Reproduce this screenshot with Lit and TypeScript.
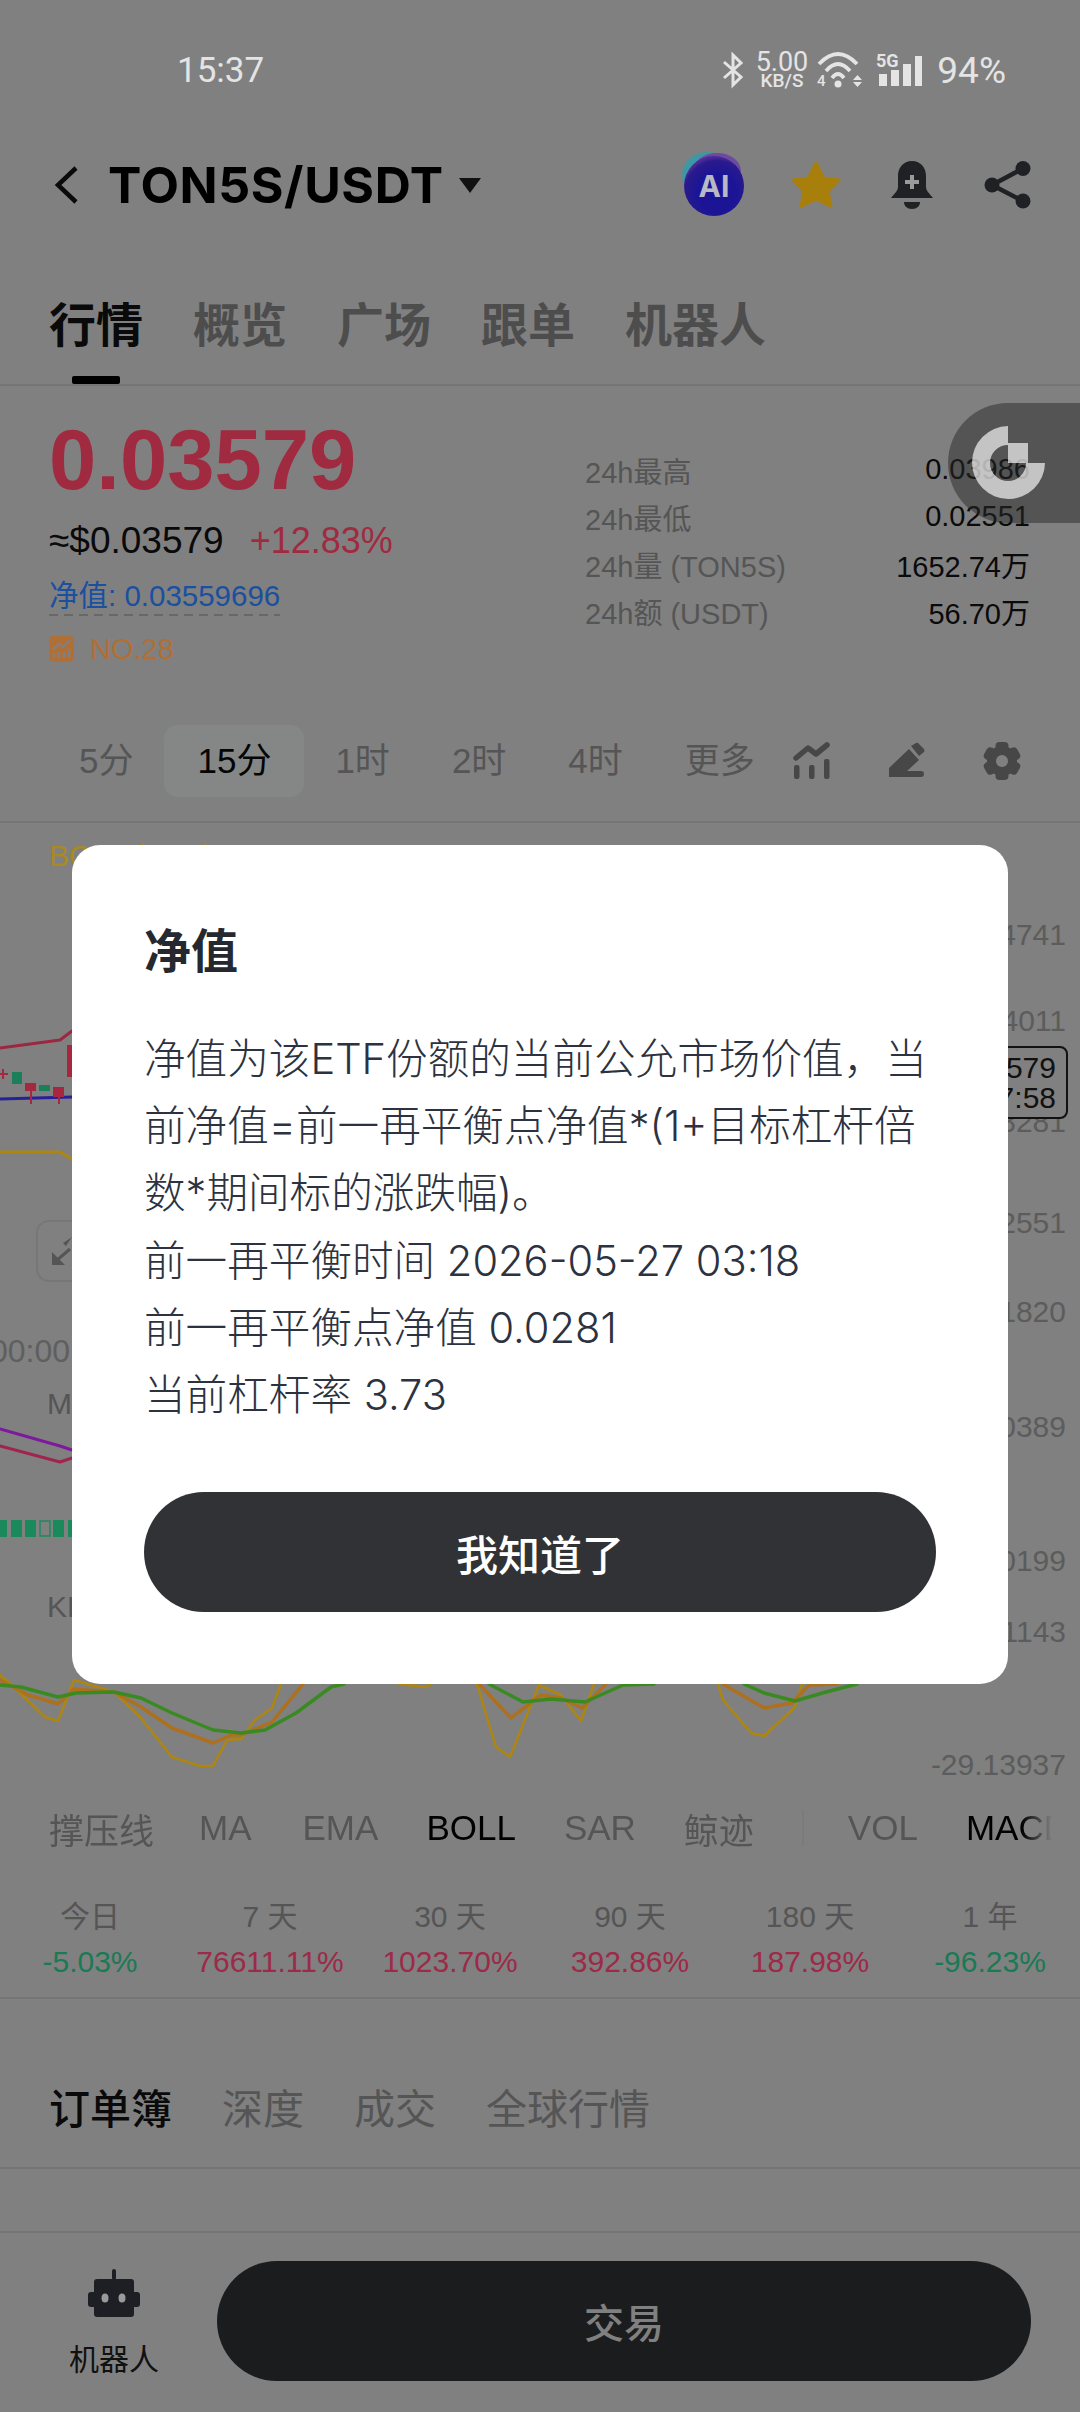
import { html, svg, LitElement, css } from 'lit';
import { customElement } from 'lit/decorators.js';

const SANS = css`'Liberation Sans', 'Noto Sans CJK SC', sans-serif`;

// kline canvas uses page coordinates through its viewBox
const AXIS = [
  ['0.04741', 935], ['0.04011', 1021], ['0.03281', 1122], ['0.02551', 1223], ['0.01820', 1312],
  ['10.0389', 1427], ['0.00199', 1561], ['31.1143', 1632], ['-29.13937', 1765],
];

const KD_LINES = [
  { cls: 'k', pts: [
    '0,1675 14,1687 45,1717 58,1721 74,1680 114,1692 141,1718 172,1757 200,1766 213,1766 227,1740 241,1739 255,1720 272,1708 281,1684',
    '399,1684 426,1687 430,1684',
    '477,1684 496,1747 510,1757 539,1685 561,1695 581,1721 594,1684',
    '718,1684 723,1700 751,1733 764,1736 795,1707 802,1684',
  ] },
  { cls: 'd', pts: [
    '0,1680 28,1695 58,1704 74,1689 114,1692 141,1707 172,1728 213,1743 231,1735 241,1735 272,1722 303,1684',
    '479,1684 511,1718 541,1695 561,1698 582,1708 606,1684',
    '723,1684 764,1708 792,1703 809,1685 837,1684',
  ] },
  { cls: 'j', pts: [
    '0,1685 21,1687 58,1697 76,1693 114,1692 141,1698 172,1713 213,1730 241,1733 265,1730 296,1713 331,1687 344,1684',
    '489,1684 523,1702 551,1699 585,1702 623,1685 654,1684',
    '744,1684 764,1693 795,1701 826,1692 857,1684',
  ] },
];

const CANDLES = [
  { x: 12, y: 1072, w: 10, h: 12, up: false },
  { x: 25, y: 1083, w: 11, h: 8, up: true },
  { x: 39, y: 1085, w: 11, h: 6, up: false },
  { x: 53, y: 1087, w: 11, h: 10, up: true },
  { x: 67, y: 1045, w: 11, h: 32, up: true },
];

const MACD_BARS = [
  [-4, 11], [11, 11], [25, 11], [53, 11], [68, 11],
];

@customElement('kline-chart')
export class KlineChart extends LitElement {
  static styles = css`
    :host { display: block; height: 967px; }
    svg { display: block; }
    text { font-family: ${SANS}; font-size: 30px; fill: #5c5c5c; }
    .axis { text-anchor: end; }
    .dark { fill: #111; }
    .caption { fill: #555; font-size: 30px; }
    .boll { fill: #a98a1e; font-size: 30px; }
    .navy { fill: #1c1a6e; font-size: 30px; }
    .wine { fill: #98283f; font-size: 30px; }
    polyline { fill: none; stroke-linejoin: round; stroke-linecap: round; }
    .k { stroke: #ae860f; stroke-width: 2.5; }
    .d { stroke: #ac701f; stroke-width: 3.5; }
    .j { stroke: #3a8a22; stroke-width: 3.5; }
  `;

  render() {
    return html`
      <svg width="1080" height="967" viewBox="0 823 1080 967">
        <text class="boll" x="49" y="866">BOLL:(20,2)</text>
        <text class="navy" x="360" y="866">UP:0.03577</text>
        <text class="wine" x="530" y="866">MB:0.02543</text>
        <text class="boll" x="730" y="866">DN:0.01509</text>

        <polyline points="0,1048 60,1040 72,1031" stroke="#9c2740" stroke-width="3"></polyline>
        <polyline points="0,1099 72,1097" stroke="#27209a" stroke-width="3"></polyline>
        <polyline points="0,1152 60,1152 72,1159" stroke="#ae860f" stroke-width="3"></polyline>
        <path d="M3 1069v10M-2 1074h10" stroke="#a5283f" stroke-width="2"></path>
        <path d="M31 1091v13M59 1097v7" stroke="#a5283f" stroke-width="2"></path>
        ${CANDLES.map((c) => svg`<rect x=${c.x} y=${c.y} width=${c.w} height=${c.h} fill=${c.up ? '#a5283f' : '#1a7f5a'}></rect>`)}

        <rect x="37" y="1221" width="60" height="60" rx="12" fill="none" stroke="#777" stroke-width="2"></rect>
        <path d="M52 1265v-13l13 13zM72 1237l-9 6 3 3z" fill="#555"></path>
        <path d="M56 1261l14-12" stroke="#555" stroke-width="3"></path>

        <text x="-10" y="1362" style="font-size:32px;fill:#5f5f5f">00:00</text>
        <text class="caption" x="47" y="1414">MACD</text>
        <polyline points="0,1429 60,1446 72,1450" stroke="#7d1a9b" stroke-width="3"></polyline>
        <polyline points="0,1446 60,1462 72,1458" stroke="#a0244d" stroke-width="3"></polyline>
        ${MACD_BARS.map(([x, w]) => svg`<rect x=${x} y="1520" width=${w} height="17" fill="#1a8a5c"></rect>`)}
        <rect x="40" y="1521" width="10" height="15" fill="none" stroke="#1a8a5c" stroke-width="1.5"></rect>
        <text class="caption" x="47" y="1617">KDJ</text>

        ${KD_LINES.map((l) => l.pts.map((p) => svg`<polyline class=${l.cls} points=${p}></polyline>`))}

        ${AXIS.map(([label, y]) => svg`<text class="axis" x="1066" y=${Number(y) + 10}>${label}</text>`)}
        <rect x="940" y="1047" width="127" height="71" rx="7" fill="#808080" stroke="#111" stroke-width="2"></rect>
        <text class="axis dark" x="1056" y="1078">0.03579</text>
        <text class="axis dark" x="1056" y="1108">07:58</text>
      </svg>
    `;
  }
}

@customElement('info-dialog')
export class InfoDialog extends LitElement {
  static styles = css`
    :host {
      position: absolute;
      inset: 0;
      display: flex;
      justify-content: center;
      align-items: flex-start;
      padding-top: 845px;
      box-sizing: border-box;
    }
    .card {
      box-sizing: border-box;
      width: 936px;
      height: 839px;
      padding: 78px 72px 0;
      background: #fff;
      border-radius: 28px;
      font-family: Inter, 'Noto Sans CJK SC', sans-serif;
    }
    .title {
      font-size: 47px;
      line-height: 56px;
      font-weight: 700;
      color: #25282f;
    }
    .body {
      margin-top: 47px;
      font-size: 41.6px;
      line-height: 67.2px;
      font-weight: 300;
      color: #2c3240;
    }
    .ok {
      display: flex;
      align-items: center;
      justify-content: center;
      height: 120px;
      margin-top: 63px;
      border-radius: 60px;
      background: #313235;
      color: #fff;
      font-size: 42px;
      font-weight: 500;
    }
  `;

  render() {
    return html`
      <div class="card">
        <div class="title">净值</div>
        <div class="body">
          <div>净值为该ETF份额的当前公允市场价值，当前净值=前一再平衡点净值*(1+目标杠杆倍数*期间标的涨跌幅)。</div>
          <div>前一再平衡时间 2026-05-27 03:18</div>
          <div>前一再平衡点净值 0.0281</div>
          <div>当前杠杆率 3.73</div>
        </div>
        <div class="ok">我知道了</div>
      </div>
    `;
  }
}

const STATS = [
  ['24h最高', '0.03986'],
  ['24h最低', '0.02551'],
  ['24h量 (TON5S)', '1652.74万'],
  ['24h额 (USDT)', '56.70万'],
];

const PERIODS = [
  ['今日', '-5.03%', false],
  ['7 天', '76611.11%', true],
  ['30 天', '1023.70%', true],
  ['90 天', '392.86%', true],
  ['180 天', '187.98%', true],
  ['1 年', '-96.23%', false],
];

@customElement('app-root')
export class AppRoot extends LitElement {
  static styles = css`
    :host {
      display: block;
      position: relative;
      width: 1080px;
      height: 2412px;
      overflow: hidden;
      background: #808080;
      color: #000;
      font-family: ${SANS};
    }
    svg { display: block; flex: none; overflow: visible; }

    .status {
      display: flex;
      align-items: center;
      height: 140px;
      padding: 0 74px 0 177px;
      box-sizing: border-box;
      color: #e4e4e4;
      font-family: Roboto, sans-serif;
    }
    .clock { font-size: 35px; }
    .status-right { display: flex; align-items: center; margin-left: auto; }
    .speed {
      display: flex;
      flex-direction: column;
      align-items: center;
      margin: 0 8px 0 12px;
      font-size: 27px;
      line-height: 21px;
    }
    .speed small { font-size: 19px; line-height: 15px; font-weight: 500; }
    .battery { margin-left: 15px; font-size: 37px; }

    .nav {
      display: flex;
      align-items: center;
      height: 90px;
      padding: 0 48px 0 54px;
    }
    .pair {
      margin-left: 30px;
      font-family: Inter, sans-serif;
      font-size: 50px;
      font-weight: 700;
      letter-spacing: 0.6px;
    }
    .caret { margin-left: 15px; }
    .nav-actions { display: flex; align-items: center; margin-left: auto; }

    .tabs {
      display: flex;
      gap: 50px;
      height: 156px;
      padding: 66px 49px 0;
      box-sizing: border-box;
      border-bottom: 2px solid #757575;
      font-size: 47px;
      line-height: 60px;
      font-weight: 700;
      color: #4d4d4d;
    }
    .tab { display: flex; flex-direction: column; align-items: center; }
    .tab.on { color: #0a0a0a; }
    .tab.on::after {
      content: '';
      width: 48px;
      height: 9px;
      margin-top: 20px;
      border-radius: 2px;
      background: #000;
    }

    .summary {
      display: flex;
      justify-content: space-between;
      height: 336px;
      padding: 24px 50px 0 49px;
      box-sizing: border-box;
    }
    .price { font-size: 85px; line-height: 100px; font-weight: 700; color: #a02a40; }
    .usd { display: flex; gap: 26px; margin-top: 6px; font-size: 37px; line-height: 50px; color: #0a0a0a; }
    .usd span:last-child { font-size: 36px; color: #a02a40; }
    .nav-value {
      margin-top: 12px;
      width: fit-content;
      padding-bottom: 2px;
      font-size: 29.5px;
      line-height: 36px;
      color: #1b4f9f;
      background: repeating-linear-gradient(to right, #686868 0 9px, transparent 9px 15px) left bottom / 100% 2px no-repeat;
    }
    .rank { display: flex; align-items: center; gap: 16px; margin-top: 13px; font-size: 29px; line-height: 40px; color: #b26f35; }
    .stats {
      display: grid;
      grid-template-columns: auto auto;
      grid-auto-rows: 47px;
      align-items: center;
      justify-content: space-between;
      width: 445px;
      margin-top: 36px;
      height: 188px;
      font-size: 29px;
      color: #0a0a0a;
    }
    .stats .label { color: #555; }
    .stats .value { text-align: right; }

    .frames {
      display: flex;
      align-items: flex-start;
      height: 101px;
      padding: 3px 0 0 48px;
      box-sizing: border-box;
      border-bottom: 2px solid #757575;
      font-size: 35px;
      color: #555;
    }
    .frame { height: 72px; line-height: 72px; padding: 0 31px; border-radius: 14px; }
    .frame.on { padding: 0 33px; background: #848786; color: #050505; }
    .frame-tools { display: flex; gap: 57px; align-items: center; height: 72px; margin-left: 7px; }

    .indicators {
      display: flex;
      align-items: center;
      gap: 48px;
      width: 1003px;
      height: 76px;
      margin-left: 49px;
      overflow: hidden;
      font-size: 35px;
      color: #555;
      white-space: nowrap;
      -webkit-mask-image: linear-gradient(to right, #000 97%, transparent);
      mask-image: linear-gradient(to right, #000 97%, transparent);
    }
    .indicators .on { color: #000; }
    .indicators .ma { margin: 0 3px 0 -3px; }
    .indicators .sep { flex: none; width: 2px; height: 36px; margin-right: -4px; background: #7b7b7b; }

    .periods {
      display: grid;
      grid-template-columns: repeat(6, 1fr);
      height: 133px;
      padding-top: 30px;
      box-sizing: border-box;
      border-bottom: 2px solid #757575;
      text-align: center;
    }
    .period-label { font-size: 30px; line-height: 42px; color: #555; }
    .period-value { margin-top: 4px; font-size: 30px; line-height: 40px; }
    .rise { color: #9c2a48; }
    .fall { color: #1a7a55; }

    .book-tabs {
      display: flex;
      gap: 50px;
      height: 170px;
      padding: 81px 49px 0;
      box-sizing: border-box;
      border-bottom: 2px solid #757575;
      font-size: 41px;
      line-height: 60px;
      color: #555;
    }
    .book-tabs .on { color: #0a0a0a; font-weight: 500; }

    .book-row {
      display: flex;
      justify-content: space-between;
      height: 62px;
      padding: 54px 50px 0;
      box-sizing: border-box;
      overflow: hidden;
      font-size: 35px;
      line-height: 40px;
    }

    .bottom {
      display: flex;
      align-items: flex-start;
      height: 180px;
      box-sizing: border-box;
      border-top: 2px solid #757575;
    }
    .robot {
      display: flex;
      flex-direction: column;
      align-items: center;
      box-sizing: border-box;
      width: 217px;
      padding: 36px 0 0 11px;
      font-size: 30px;
      color: #111;
    }
    .robot span { margin-top: 25px; line-height: 36px; white-space: nowrap; }
    .trade {
      display: flex;
      align-items: center;
      justify-content: center;
      width: 814px;
      height: 120px;
      margin-top: 28px;
      border-radius: 60px;
      background: #1b1c1e;
      color: #808080;
      font-size: 40px;
      font-weight: 500;
    }

    .float-tool {
      position: absolute;
      top: 403px;
      right: 0;
      display: flex;
      align-items: center;
      width: 132px;
      height: 120px;
      padding-left: 24px;
      box-sizing: border-box;
      border-radius: 60px 0 0 60px;
      background: rgba(40, 40, 40, 0.5);
    }
  `;

  private statusIcons() {
    return html`
      <svg width="22" height="34" viewBox="0 0 22 34" fill="none" stroke="#e4e4e4" stroke-width="3">
        <path d="M2 9l17 15-8 8V2l8 8L2 25"></path>
      </svg>
      <div class="speed">5.00<small>KB/S</small></div>
      <svg width="46" height="34" viewBox="0 0 46 34" fill="none" stroke="#e4e4e4" stroke-width="3.8">
        <path d="M3 11Q22 -9 41 11M10 18Q22 4 34 18M16 25Q22 17 28 25"></path>
        <circle cx="22" cy="31" r="3.5" fill="#e4e4e4" stroke="none"></circle>
        <path d="M37 27l4.5-5 4.5 5zM37 29h9l-4.5 5z" fill="#e4e4e4" stroke="none"></path>
        <text x="1" y="33" font-size="15" font-family="Roboto" font-weight="500" fill="#e4e4e4" stroke="none">4</text>
      </svg>
      <svg style="margin-left:14px" width="46" height="34" viewBox="0 0 46 34" fill="#e4e4e4">
        <text x="0" y="14" font-size="18" font-family="Roboto" font-weight="700">5G</text>
        <rect x="3" y="21" width="8" height="12"></rect>
        <rect x="15" y="17" width="8" height="16"></rect>
        <rect x="27" y="11" width="8" height="22"></rect>
        <rect x="39" y="3" width="7" height="30"></rect>
      </svg>
    `;
  }

  private navIcons() {
    return html`
      <svg width="64" height="68" viewBox="0 0 64 68">
        <defs>
          <radialGradient id="ai" cx="0.55" cy="0.62" r="0.6">
            <stop offset="0.55" stop-color="#1b1596"></stop>
            <stop offset="0.9" stop-color="#2a1a8c"></stop>
            <stop offset="1" stop-color="#4a2a9a"></stop>
          </radialGradient>
        </defs>
        <ellipse cx="26" cy="24" rx="25" ry="23" fill="#3f97a3"></ellipse>
        <ellipse cx="36" cy="20" rx="24" ry="18" fill="#6d4aa0"></ellipse>
        <circle cx="33" cy="35" r="30" fill="url(#ai)"></circle>
        <text x="33" y="46" text-anchor="middle" font-family="Inter" font-size="30" font-weight="700" fill="#b9b9c6">AI</text>
      </svg>
      <svg style="margin-left:45px" width="52" height="48" viewBox="0 0 52 48">
        <path d="M26 2l7.5 15 15.5 2-11 11 3 15.5-15-7.5-15 7.5 3-15.500L3 19l15.5-2z" fill="#a87f0a" stroke="#a87f0a" stroke-width="3" stroke-linejoin="round"></path>
      </svg>
      <svg style="margin-left:47px" width="46" height="48" viewBox="0 0 46 48">
        <path d="M23 0c9 0 14 7 14 15v11c0 4 4 7 7 11H2c3-4 7-7 7-11V15C9 7 14 0 23 0z" fill="#1f2125"></path>
        <path d="M15 41h16c0 4-3 7-8 7s-8-3-8-7z" fill="#1f2125"></path>
        <path d="M23 14v14M16 21h14" stroke="#9a9a9a" stroke-width="4"></path>
      </svg>
      <svg style="margin-left:49px" width="48" height="48" viewBox="0 0 48 48" fill="#1f2125">
        <circle cx="8" cy="24" r="7.5"></circle>
        <circle cx="39" cy="7.5" r="7.5"></circle>
        <circle cx="39" cy="40" r="7.5"></circle>
        <path d="M8 24L39 7.5M8 24l31 16" stroke="#1f2125" stroke-width="4.5"></path>
      </svg>
    `;
  }

  private toolIcons() {
    return html`
      <svg width="38" height="38" viewBox="0 0 38 38" fill="#464746">
        <rect x="1" y="23" width="5.5" height="14" rx="2"></rect>
        <rect x="16" y="23" width="5.5" height="14" rx="2"></rect>
        <rect x="31" y="17" width="5.5" height="20" rx="2"></rect>
        <path d="M3 16L15 6l8 6L34 3" fill="none" stroke="#464746" stroke-width="5.5" stroke-linecap="round" stroke-linejoin="round"></path>
      </svg>
      <svg width="38" height="36" viewBox="0 0 38 36" fill="#464746">
        <path d="M1 34v-9L21 6l10 11-12 11h14a3 3 0 0 1 0 6z"></path>
        <path d="M23 3l5-3q2-1 3 1l5 5q1 2 0 3l-5 4z"></path>
      </svg>
      <svg width="38" height="38" viewBox="0 0 38 38" fill="#464746">
        <circle cx="19" cy="19" r="15"></circle>
        ${[0, 60, 120].map((a) => svg`<rect x="12.500" y="0" width="13" height="38" rx="4" transform="rotate(${a} 19 19)"></rect>`)}
        <circle cx="19" cy="19" r="6" fill="#808080"></circle>
      </svg>
    `;
  }

  render() {
    return html`
      <div class="status">
        <span class="clock">15:37</span>
        <div class="status-right">
          ${this.statusIcons()}
          <span class="battery">94%</span>
        </div>
      </div>

      <div class="nav">
        <svg width="24" height="38" viewBox="0 0 24 38" fill="none" stroke="#0a0a0a" stroke-width="4.5">
          <path d="M22 2L4 19l18 17"></path>
        </svg>
        <span class="pair">TON5S/USDT</span>
        <svg class="caret" width="22" height="15" viewBox="0 0 22 15"><path d="M0 0h22L11 15z" fill="#111"></path></svg>
        <div class="nav-actions">${this.navIcons()}</div>
      </div>

      <div class="tabs">
        <div class="tab on">行情</div>
        <div class="tab">概览</div>
        <div class="tab">广场</div>
        <div class="tab">跟单</div>
        <div class="tab">机器人</div>
      </div>

      <div class="summary">
        <div>
          <div class="price">0.03579</div>
          <div class="usd"><span>≈$0.03579</span><span>+12.83%</span></div>
          <div class="nav-value">净值: 0.03559696</div>
          <div class="rank">
            <svg width="25" height="26" viewBox="0 0 25 26">
              <rect width="25" height="26" rx="5" fill="#b26f35"></rect>
              <path d="M5 22v-5M10 22v-6M15 22v-6M20 22v-9M4 13l6-5 4 3 7-7" stroke="#808080" stroke-width="2.4" fill="none"></path>
            </svg>
            NO.28
          </div>
        </div>
        <div class="stats">
          ${STATS.map(([label, value]) => html`
            <span class="label">${label}</span>
            <span class="value">${value}</span>
          `)}
        </div>
      </div>

      <div class="frames">
        <div class="frame">5分</div>
        <div class="frame on">15分</div>
        <div class="frame">1时</div>
        <div class="frame">2时</div>
        <div class="frame">4时</div>
        <div class="frame">更多</div>
        <div class="frame-tools">${this.toolIcons()}</div>
      </div>

      <kline-chart></kline-chart>

      <div class="indicators">
        <span>撑压线</span><span class="ma">MA</span><span>EMA</span><span class="on">BOLL</span><span>SAR</span><span>鲸迹</span>
        <i class="sep"></i>
        <span>VOL</span><span class="on">MACD</span>
      </div>

      <div class="periods">
        ${PERIODS.map(([label, value, up]) => html`
          <div>
            <div class="period-label">${label}</div>
            <div class="period-value ${up ? 'rise' : 'fall'}">${value}</div>
          </div>
        `)}
      </div>

      <div class="book-tabs">
        <span class="on">订单簿</span><span>深度</span><span>成交</span><span>全球行情</span>
      </div>

      <div class="book-row">
        <span class="rise">0.03579</span>
        <span class="fall">18.49%</span>
      </div>

      <div class="bottom">
        <div class="robot">
          <svg width="52" height="48" viewBox="0 0 52 48" fill="#1d1f24">
            <rect x="24" y="0" width="4" height="11" rx="2"></rect>
            <rect x="6" y="10" width="40" height="38" rx="3"></rect>
            <rect x="0" y="23" width="52" height="15" rx="3"></rect>
            <ellipse cx="17" cy="29" rx="3.5" ry="4.5" fill="#9a9a9a"></ellipse>
            <ellipse cx="34" cy="29" rx="3.5" ry="4.5" fill="#9a9a9a"></ellipse>
          </svg>
          <span>机器人</span>
        </div>
        <div class="trade">交易</div>
      </div>

      <div class="float-tool">
        <svg width="74" height="74" viewBox="0 0 74 74" fill="#f4f4f4" fill-opacity="0.7">
          <path d="M36 0v19a18 18 0 1 0 18 18h19A36.5 36.5 0 1 1 36 0z"></path>
          <rect x="36" y="17" width="20" height="20"></rect>
        </svg>
      </div>

      <info-dialog></info-dialog>
    `;
  }
}
